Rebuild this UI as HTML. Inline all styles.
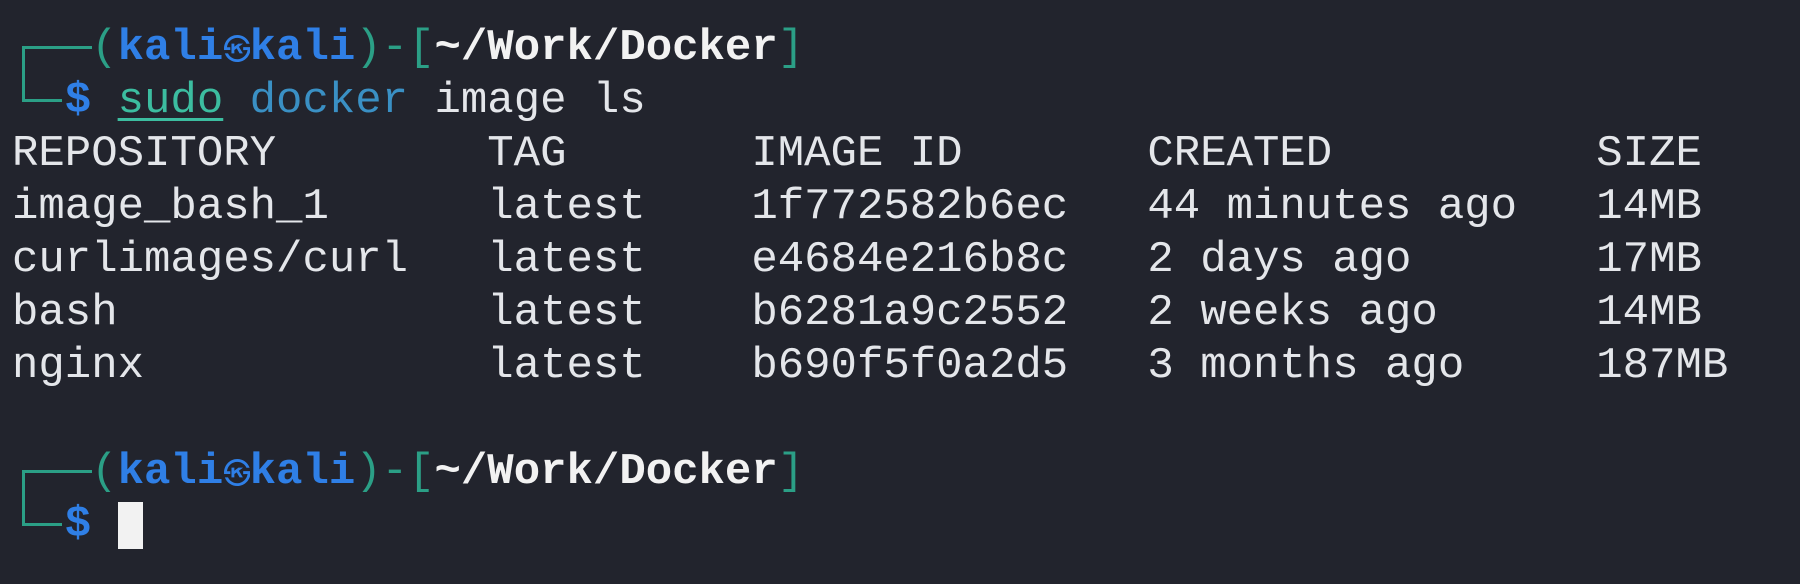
<!DOCTYPE html>
<html><head><meta charset="utf-8"><style>
html,body{margin:0;padding:0;background:#22242d;width:1800px;height:584px;overflow:hidden}
.t{position:absolute;left:12px;top:22px;font-family:"Liberation Mono","DejaVu Sans Mono",monospace;font-size:44px;line-height:53px;color:#e4e6ea;white-space:pre;letter-spacing:0}
.b{color:#2f7fe6;font-weight:bold}
.g{color:#2b9f86}
.w{color:#f2f2f2;font-weight:bold}
.s{color:#3cbda0;text-decoration:underline;text-decoration-thickness:3px;text-underline-offset:6px}
.d{color:#3a90c4}
.k{display:inline-block;width:26.4px;text-align:center;font-family:"Noto Sans CJK JP",sans-serif;font-size:28px;line-height:53px;color:#2f7fe6;vertical-align:top;overflow:hidden}
.ln{position:absolute;background:#2b9f86}
.cur{position:absolute;left:118px;top:502px;width:25px;height:47px;background:#f2f2f2}
</style></head><body>
<div class="ln" style="left:22px;top:46px;width:3px;height:56px"></div>
<div class="ln" style="left:22px;top:46px;width:70px;height:3px"></div>
<div class="ln" style="left:22px;top:99px;width:40px;height:3px"></div>
<div class="ln" style="left:22px;top:470px;width:3px;height:56px"></div>
<div class="ln" style="left:22px;top:470px;width:70px;height:3px"></div>
<div class="ln" style="left:22px;top:523px;width:40px;height:3px"></div>
<div class="t"><span class="g">   (</span><span class="b">kali</span><span class="k">㉿</span><span class="b">kali</span><span class="g">)-[</span><span class="w">~/Work/Docker</span><span class="g">]</span>
<span class="b">  $</span> <span class="s">sudo</span> <span class="d">docker</span> image ls
REPOSITORY        TAG       IMAGE ID       CREATED          SIZE
image_bash_1      latest    1f772582b6ec   44 minutes ago   14MB
curlimages/curl   latest    e4684e216b8c   2 days ago       17MB
bash              latest    b6281a9c2552   2 weeks ago      14MB
nginx             latest    b690f5f0a2d5   3 months ago     187MB

<span class="g">   (</span><span class="b">kali</span><span class="k">㉿</span><span class="b">kali</span><span class="g">)-[</span><span class="w">~/Work/Docker</span><span class="g">]</span>
<span class="b">  $</span> </div>
<div class="cur"></div>
</body></html>
